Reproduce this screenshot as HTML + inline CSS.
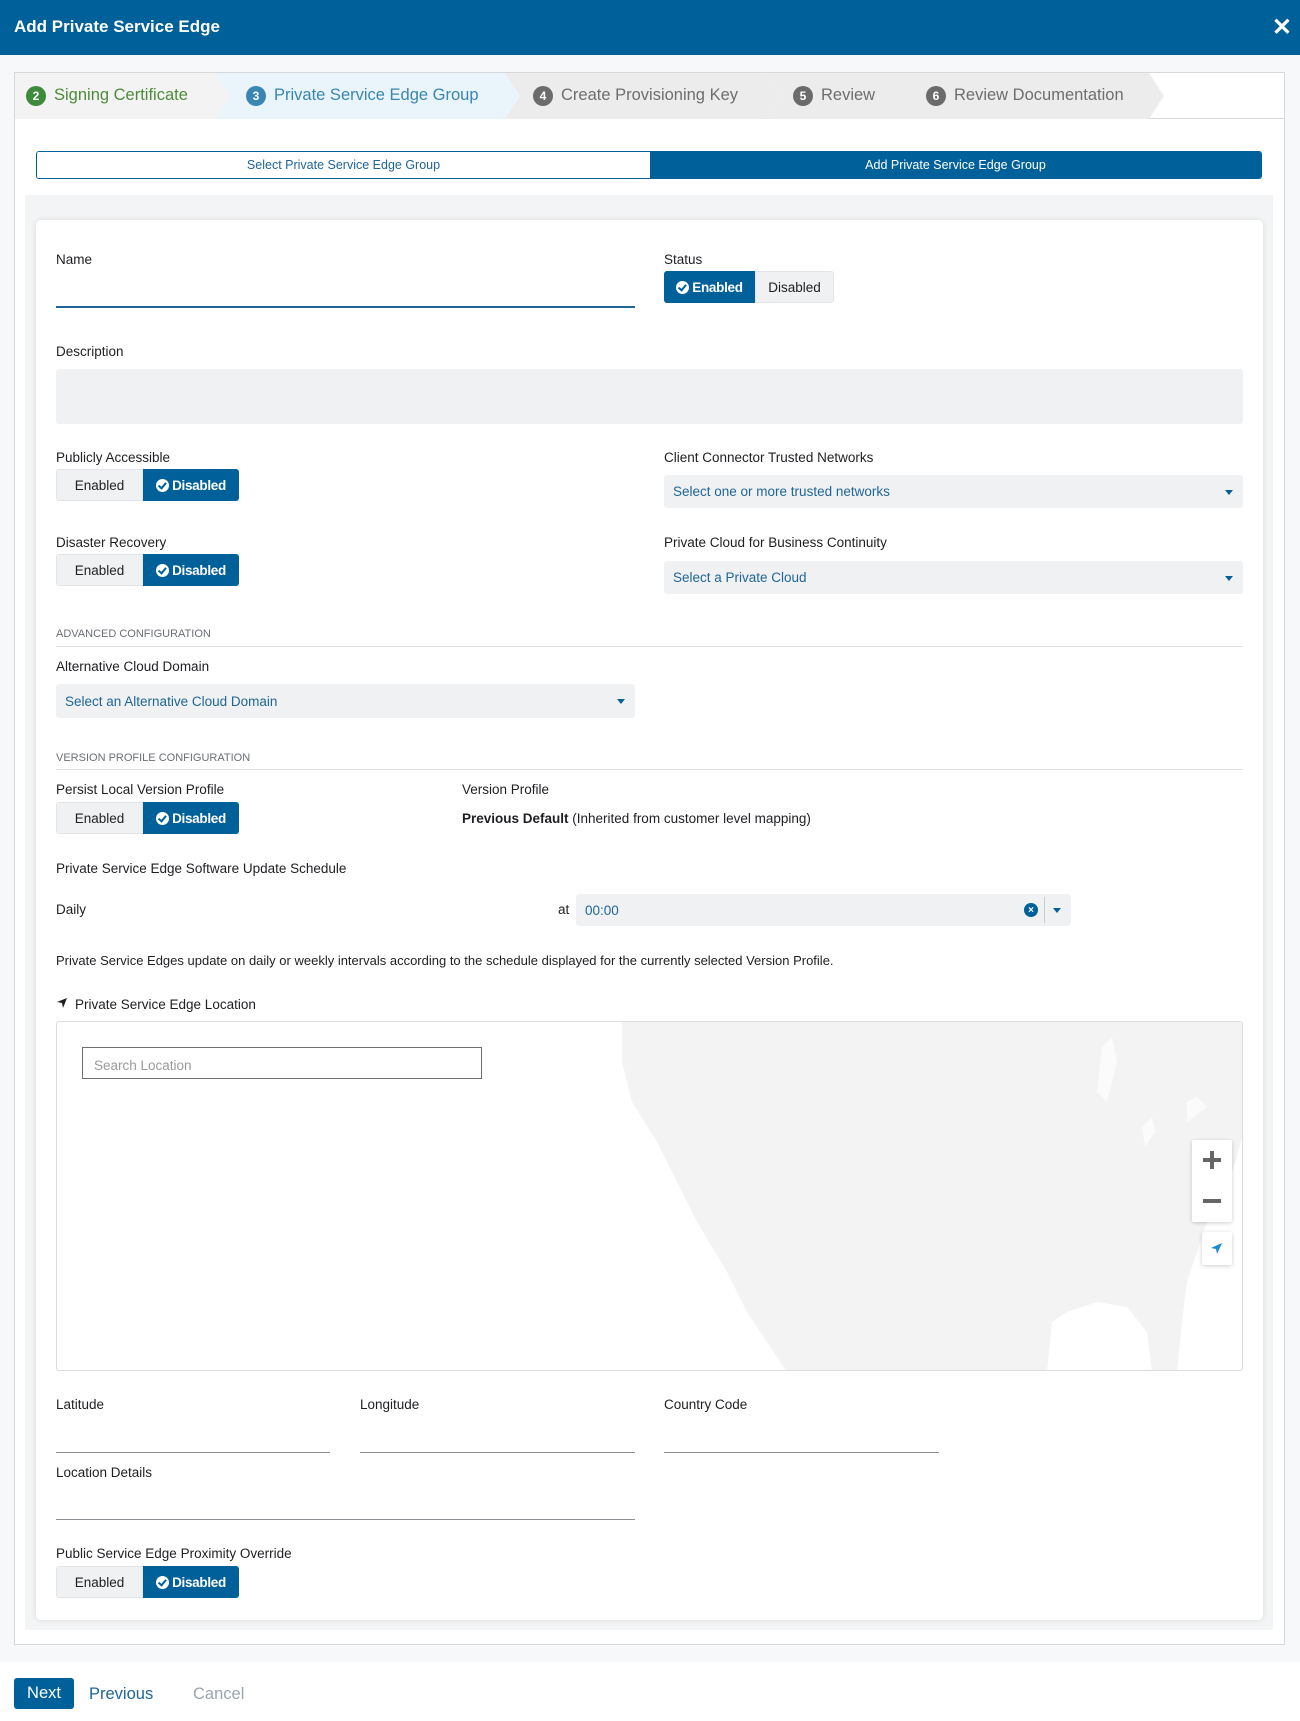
<!DOCTYPE html>
<html><head><meta charset="utf-8"><style>
*{box-sizing:border-box;margin:0;padding:0}
body{width:1300px;height:1721px;position:relative;background:#fff;font-family:"Liberation Sans",sans-serif;color:#1e1f22;overflow:hidden}
.a{position:absolute}
.lbl{position:absolute;font-size:13.5px;color:#1e1f22}
.hdr{left:0;top:0;width:1300px;height:55px;background:#00609a;color:#fff;font-weight:bold;font-size:17px;padding:17px 0 0 14px}
.sel{position:absolute;background:#f0f1f3;border-radius:3px;color:#1f6597;font-size:13.5px;padding-left:9px;display:flex;align-items:center}
.sel .car{position:absolute;right:10px;top:50%;margin-top:-2px;width:0;height:0;border-left:4px solid transparent;border-right:4px solid transparent;border-top:5px solid #00609a}
.tg{position:absolute;display:flex;height:32px;font-size:13.5px;border-radius:3px;overflow:hidden}
.tg .off{background:#f0f1f3;color:#1e1f22;display:flex;align-items:center;justify-content:center;border:1px solid #e2e4e8}
.tg .on{background:#00609a;color:#fff;font-weight:bold;display:flex;align-items:center;justify-content:center;letter-spacing:-0.3px}
.ck{display:inline-block;width:13px;height:13px;border-radius:50%;background:#fff;margin-right:3px;position:relative}
.ck:after{content:"";position:absolute;left:3.5px;top:2.5px;width:3px;height:5.5px;border:solid #00609a;border-width:0 2px 2px 0;transform:rotate(40deg)}
.ul{position:absolute;height:1px;background:#8a8d92}
.sec{position:absolute;font-size:11px;color:#6b6f75;text-transform:uppercase}
.hr{position:absolute;height:1px;background:#dfe1e4;left:56px;width:1187px}
.step{position:absolute;top:72px;height:47px;display:flex;align-items:center;font-size:16.5px}
.num{display:inline-flex;width:20px;height:20px;border-radius:50%;color:#fff;font-size:12px;font-weight:bold;align-items:center;justify-content:center;margin-right:8px}
</style></head><body>
<div class="a hdr">Add Private Service Edge</div>
<div class="a" style="right:8px;top:13px;color:#fff;font-size:24px;font-weight:bold">✕</div>
<div class="a" style="left:0;top:55px;width:1300px;height:1607px;background:#f7f8fa"></div>
<div class="a" style="left:14px;top:72px;width:1271px;height:1573px;background:#fff;border:1px solid #d6d8dc"></div>
<!-- stepper -->
<div class="a" style="left:15px;top:73px;width:1269px;height:46px;border-bottom:1px solid #d6d8dc"></div>
<svg class="a" style="left:15px;top:73px" width="1150" height="46">
<polygon points="0,0 200,0 215,23 200,46 0,46" fill="#f3f3f3"/>
<polygon points="200,0 490,0 505,23 490,46 200,46 215,23" fill="#eaf4fb"/>
<polygon points="490,0 750,0 765,23 750,46 490,46 505,23" fill="#ececec"/>
<polygon points="750,0 885,0 900,23 885,46 750,46 765,23" fill="#ececec"/>
<polygon points="885,0 1148,0 1163,23 1148,46 885,46 900,23" fill="#ececec" transform="translate(-14,0)"/>
</svg>
<div class="step" style="left:26px;color:#4d8c3a"><span class="num" style="background:#3f8a3c">2</span>Signing Certificate</div>
<div class="step" style="left:246px;color:#3a86b2"><span class="num" style="background:#3a86b2">3</span>Private Service Edge Group</div>
<div class="step" style="left:533px;color:#6e6e6e"><span class="num" style="background:#6b6b6b">4</span>Create Provisioning Key</div>
<div class="step" style="left:793px;color:#6e6e6e"><span class="num" style="background:#6b6b6b">5</span>Review</div>
<div class="step" style="left:926px;color:#6e6e6e"><span class="num" style="background:#6b6b6b">6</span>Review Documentation</div>
<!-- tabs -->
<div class="a" style="left:36px;top:151px;width:1226px;height:28px;border:1px solid #00609a;border-radius:3px;overflow:hidden;display:flex;font-size:12.5px">
<div style="width:613px;display:flex;align-items:center;justify-content:center;color:#1f6597;background:#fff">Select Private Service Edge Group</div>
<div style="flex:1;display:flex;align-items:center;justify-content:center;color:#fff;background:#00609a">Add Private Service Edge Group</div></div>
<div class="a" style="left:25px;top:195px;width:1248px;height:1435px;background:#f3f4f5"></div>
<div class="a" style="left:36px;top:220px;width:1227px;height:1400px;background:#fff;border-radius:5px;box-shadow:0 0 6px rgba(0,0,0,0.1)"></div>
<!-- form -->
<div class="lbl" style="left:56px;top:252px">Name</div>
<div class="a" style="left:56px;top:306px;width:579px;height:2px;background:#1f6597"></div>
<div class="lbl" style="left:664px;top:252px">Status</div>
<div class="tg" style="left:664px;top:271px"><div class="on" style="width:91px"><span class="ck"></span>Enabled</div><div class="off" style="width:79px">Disabled</div></div>
<div class="lbl" style="left:56px;top:344px">Description</div>
<div class="a" style="left:56px;top:369px;width:1187px;height:55px;background:#f0f1f3;border-radius:3px"></div>
<div class="lbl" style="left:56px;top:450px">Publicly Accessible</div>
<div class="tg" style="left:56px;top:469px"><div class="off" style="width:87px">Enabled</div><div class="on" style="width:96px"><span class="ck"></span>Disabled</div></div>
<div class="lbl" style="left:664px;top:450px">Client Connector Trusted Networks</div>
<div class="sel" style="left:664px;top:475px;width:579px;height:33px">Select one or more trusted networks<span class="car"></span></div>
<div class="lbl" style="left:56px;top:535px">Disaster Recovery</div>
<div class="tg" style="left:56px;top:554px"><div class="off" style="width:87px">Enabled</div><div class="on" style="width:96px"><span class="ck"></span>Disabled</div></div>
<div class="lbl" style="left:664px;top:535px">Private Cloud for Business Continuity</div>
<div class="sel" style="left:664px;top:561px;width:579px;height:33px">Select a Private Cloud<span class="car"></span></div>
<div class="sec" style="left:56px;top:628px">Advanced Configuration</div>
<div class="hr" style="top:646px"></div>
<div class="lbl" style="left:56px;top:659px">Alternative Cloud Domain</div>
<div class="sel" style="left:56px;top:684px;width:579px;height:34px">Select an Alternative Cloud Domain<span class="car"></span></div>
<div class="sec" style="left:56px;top:752px">Version Profile Configuration</div>
<div class="hr" style="top:769px"></div>
<div class="lbl" style="left:56px;top:782px">Persist Local Version Profile</div>
<div class="tg" style="left:56px;top:802px"><div class="off" style="width:87px">Enabled</div><div class="on" style="width:96px"><span class="ck"></span>Disabled</div></div>
<div class="lbl" style="left:462px;top:782px">Version Profile</div>
<div class="lbl" style="left:462px;top:811px"><b>Previous Default</b> (Inherited from customer level mapping)</div>
<div class="lbl" style="left:56px;top:861px">Private Service Edge Software Update Schedule</div>
<div class="lbl" style="left:56px;top:902px">Daily</div>
<div class="lbl" style="left:558px;top:902px">at</div>
<div class="sel" style="left:576px;top:894px;width:495px;height:32px">00:00
<span class="a" style="right:33px;top:9px;width:14px;height:14px;border-radius:50%;background:#00609a;color:#fff;font-size:10px;font-weight:bold;display:flex;align-items:center;justify-content:center">×</span>
<span class="a" style="right:26px;top:3px;width:1px;height:26px;background:#c9ccd0"></span><span class="car"></span></div>
<div class="lbl" style="left:56px;top:953px;font-size:13px">Private Service Edges update on daily or weekly intervals according to the schedule displayed for the currently selected Version Profile.</div>
<svg class="a" style="left:56px;top:997px" width="12" height="12"><path d="M11 1 L1 5 L6 6 L7 11 Z" fill="#1e1f22"/></svg>
<div class="lbl" style="left:75px;top:997px">Private Service Edge Location</div>
<!-- map -->
<div class="a" style="left:56px;top:1021px;width:1187px;height:350px;border:1px solid #dcdde0;border-radius:3px;overflow:hidden;background:#fff">
<svg width="1187" height="350" class="a" style="left:0;top:0">
<path d="M565 0 L1187 0 L1187 110 L1175 150 L1160 175 L1150 200 L1140 230 L1130 260 L1125 300 L1120 350 L1095 350 L1090 310 L1070 285 L1040 280 L1010 290 L995 300 L990 350 L730 350 L710 320 L690 290 L670 250 L640 200 L620 160 L600 120 L575 80 L565 40 Z" fill="#f3f3f3"/>
<path d="M1045 25 L1055 15 L1060 40 L1050 80 L1040 70 Z M1085 105 L1095 95 L1098 110 L1088 125 Z M1130 80 L1140 75 L1150 85 L1130 100 Z" fill="#fbfbfb"/>
</svg>
<div class="a" style="left:25px;top:25px;width:400px;height:32px;border:1px solid #6e6e6e;font-size:13.5px;color:#9a9a9a;padding:10px 0 0 11px;background:#fff">Search Location</div>
<div class="a" style="left:1135px;top:118px;width:40px;height:82px;background:#fff;box-shadow:0 1px 4px rgba(0,0,0,.2);border-radius:2px">
<div class="a" style="left:11px;top:18px;width:18px;height:4px;background:#666"></div><div class="a" style="left:18px;top:11px;width:4px;height:18px;background:#666"></div>
<div class="a" style="left:11px;top:59px;width:18px;height:4px;background:#666"></div></div>
<div class="a" style="left:1145px;top:210px;width:30px;height:33px;background:#fff;box-shadow:0 1px 4px rgba(0,0,0,.2);border-radius:2px">
<svg width="30" height="33"><path d="M20 11 L9 16 L14 17 L15 22 Z" fill="#1a8ad0"/></svg></div>
</div>
<div class="lbl" style="left:56px;top:1397px">Latitude</div>
<div class="lbl" style="left:360px;top:1397px">Longitude</div>
<div class="lbl" style="left:664px;top:1397px">Country Code</div>
<div class="ul" style="left:56px;top:1452px;width:274px"></div>
<div class="ul" style="left:360px;top:1452px;width:275px"></div>
<div class="ul" style="left:664px;top:1452px;width:275px"></div>
<div class="lbl" style="left:56px;top:1465px">Location Details</div>
<div class="ul" style="left:56px;top:1519px;width:579px"></div>
<div class="lbl" style="left:56px;top:1546px">Public Service Edge Proximity Override</div>
<div class="tg" style="left:56px;top:1566px"><div class="off" style="width:87px">Enabled</div><div class="on" style="width:96px"><span class="ck"></span>Disabled</div></div>
<!-- footer -->
<div class="a" style="left:14px;top:1678px;width:60px;height:31px;background:#00609a;color:#fff;border-radius:3px;font-size:16.5px;display:flex;align-items:center;justify-content:center">Next</div>
<div class="a" style="left:89px;top:1685px;font-size:16.5px;color:#1f6597">Previous</div>
<div class="a" style="left:193px;top:1685px;font-size:16.5px;color:#9aa4b0">Cancel</div>
</body></html>
